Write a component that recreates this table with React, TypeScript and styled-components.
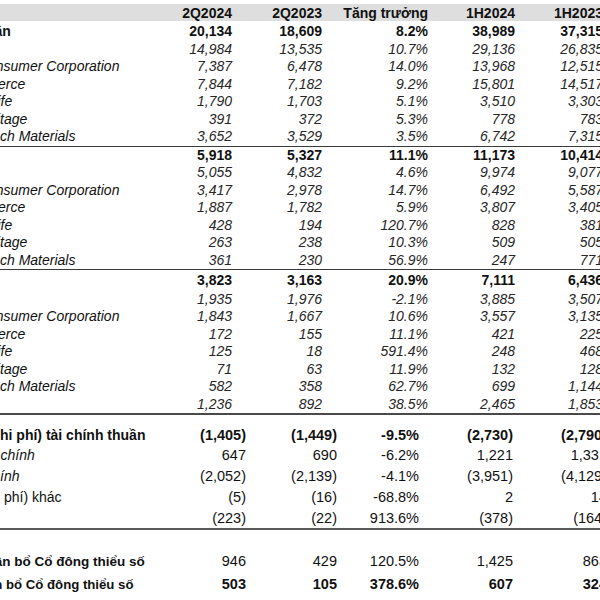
import React from "react";
import styled, { createGlobalStyle } from "styled-components";

const GlobalStyle = createGlobalStyle`
  html, body {
    margin: 0;
    padding: 0;
    background: #ffffff;
    overflow: hidden;
  }
  body {
    font-family: "Liberation Sans", Arial, sans-serif;
    color: #111111;
  }
`;

/* The sheet is wider than the window: its label column begins 150px left of the page. */
const SHIFT = 150;
const UPPER_COLS = "300px 82px 90px 106px 87px 88px";
const LOWER_COLS = "300px 96px 91px 82px 94px 94px";

const Sheet = styled.div`
  width: 760px;
  margin-left: -${SHIFT}px;
  padding-top: 4px;
  display: flex;
  flex-direction: column;
`;

const Section = styled.div<{ $size: number }>`
  display: flex;
  flex-direction: column;
  font-size: ${(p) => p.$size}px;
`;

const HeaderRow = styled.div`
  display: grid;
  grid-template-columns: ${UPPER_COLS};
  height: 17px;
  line-height: 19px;
  background: #dedede;
  font-weight: 700;
  margin-bottom: 2px;
  white-space: nowrap;
`;

const DataRow = styled.div<{ $cols: string; $h: number }>`
  display: grid;
  grid-template-columns: ${(p) => p.$cols};
  height: ${(p) => p.$h}px;
  line-height: ${(p) => p.$h}px;
  white-space: nowrap;
`;

const LabelCell = styled.div<{ $bold?: boolean; $italic?: boolean; $size?: number }>`
  display: flex;
  min-width: 0;
  font-weight: ${(p) => (p.$bold ? 700 : 400)};
  font-style: ${(p) => (p.$italic ? "italic" : "normal")};
  ${(p) => (p.$size ? `font-size: ${p.$size}px;` : "")}
`;

/* the start of a label that lies left of the window; it ends where the visible part begins */
const LabelLead = styled.span<{ $w: number }>`
  display: flex;
  justify-content: flex-end;
  flex: none;
  width: ${(p) => p.$w}px;
`;

const LabelRest = styled.span`
  flex: none;
`;

const NumCell = styled.div<{ $bold?: boolean; $italic?: boolean }>`
  text-align: right;
  font-weight: ${(p) => (p.$bold ? 700 : 400)};
  font-style: ${(p) => (p.$italic ? "italic" : "normal")};
  color: ${(p) => (p.$italic ? "#262626" : "#111111")};
`;

const Rule = styled.div<{ $w: number; $color: string }>`
  height: 0;
  border-top: ${(p) => p.$w}px solid ${(p) => p.$color};
`;

const Spacer = styled.div<{ $h: number }>`
  height: ${(p) => p.$h}px;
`;

type Line = {
  lead: string;
  rest?: string;
  at: number; // page x where the visible part of the label begins
  values: string[];
  bold?: boolean;
  italic?: boolean;
  italicValues?: boolean;
  valueBold?: boolean;
  size?: number;
  h?: number;
};

const HIDDEN = -10;

const mcc = (v: string[]): Line => ({ lead: "Masan Con", rest: "sumer Corporation", at: 3.5, italic: true, italicValues: true, values: v });
const wcm = (v: string[]): Line => ({ lead: "WinComm", rest: "erce", at: -2, italic: true, italicValues: true, values: v });
const mml = (v: string[]): Line => ({ lead: "Masan MEATLi", rest: "fe", at: 0.5, italic: true, italicValues: true, values: v });
const plh = (v: string[]): Line => ({ lead: "Phuc Long Heri", rest: "tage", at: 0, italic: true, italicValues: true, values: v });
const mht = (v: string[]): Line => ({ lead: "Masan High-Te", rest: "ch Materials", at: 0, italic: true, italicValues: true, values: v });
const crownx = (v: string[]): Line => ({ lead: "The CrownX", at: HIDDEN, italic: true, italicValues: true, values: v });

const block1: Line[] = [
  { lead: "Doanh thu thuầ", rest: "n", at: 2.3, bold: true, valueBold: true, values: ["20,134", "18,609", "8.2%", "38,989", "37,315"] },
  crownx(["14,984", "13,535", "10.7%", "29,136", "26,835"]),
  mcc(["7,387", "6,478", "14.0%", "13,968", "12,515"]),
  wcm(["7,844", "7,182", "9.2%", "15,801", "14,517"]),
  mml(["1,790", "1,703", "5.1%", "3,510", "3,303"]),
  plh(["391", "372", "5.3%", "778", "783"]),
  mht(["3,652", "3,529", "3.5%", "6,742", "7,315"]),
];

const block2: Line[] = [
  { lead: "EBITDA", at: HIDDEN, bold: true, valueBold: true, values: ["5,918", "5,327", "11.1%", "11,173", "10,414"] },
  crownx(["5,055", "4,832", "4.6%", "9,974", "9,077"]),
  mcc(["3,417", "2,978", "14.7%", "6,492", "5,587"]),
  wcm(["1,887", "1,782", "5.9%", "3,807", "3,405"]),
  mml(["428", "194", "120.7%", "828", "381"]),
  plh(["263", "238", "10.3%", "509", "505"]),
  mht(["361", "230", "56.9%", "247", "771"]),
];

const block3: Line[] = [
  { lead: "EBIT", at: HIDDEN, bold: true, valueBold: true, h: 20.5, values: ["3,823", "3,163", "20.9%", "7,111", "6,436"] },
  crownx(["1,935", "1,976", "-2.1%", "3,885", "3,507"]),
  mcc(["1,843", "1,667", "10.6%", "3,557", "3,135"]),
  wcm(["172", "155", "11.1%", "421", "225"]),
  mml(["125", "18", "591.4%", "248", "468"]),
  plh(["71", "63", "11.9%", "132", "128"]),
  mht(["582", "358", "62.7%", "699", "1,144"]),
  { lead: "Techcombank", at: HIDDEN, italic: true, italicValues: true, values: ["1,236", "892", "38.5%", "2,465", "1,853"] },
];

const finance: Line[] = [
  { lead: "Thu nhập/(C", rest: "hi phí) tài chính thuần", at: 0, size: 14, bold: true, valueBold: true, values: ["(1,405)", "(1,449)", "-9.5%", "(2,730)", "(2,790)"] },
  { lead: "Thu nhập tài\u00a0", rest: "chính", at: 0.5, size: 14, italic: true, values: ["647", "690", "-6.2%", "1,221", "1,331"] },
  { lead: "Chi phí tài ch", rest: "ính", at: 0, size: 14, italic: true, values: ["(2,052)", "(2,139)", "-4.1%", "(3,951)", "(4,129)"] },
  { lead: "Thu nhập/(Chi\u00a0", rest: "phí) khác", at: 4, size: 14, values: ["(5)", "(16)", "-68.8%", "2", "14"] },
  { lead: "Thuế", at: HIDDEN, size: 14, values: ["(223)", "(22)", "913.6%", "(378)", "(164)"] },
];

const profit: Line[] = [
  { lead: "LNST trước phâ", rest: "n bổ Cổ đông thiểu số", at: 2.3, size: 13.5, bold: true, values: ["946", "429", "120.5%", "1,425", "863"] },
  { lead: "LNST sau phân\u00a0", rest: "bổ Cổ đông thiểu số", at: 6, size: 13.2, bold: true, valueBold: true, values: ["503", "105", "378.6%", "607", "324"] },
];

const headers = ["2Q2024", "2Q2023", "Tăng trưởng", "1H2024", "1H2023"];

function Rows({ lines, cols, h }: { lines: Line[]; cols: string; h: number }) {
  return (
    <>
      {lines.map((l, i) => (
        <DataRow key={i} $cols={cols} $h={l.h ?? h}>
          <LabelCell $bold={l.bold} $italic={l.italic} $size={l.size}>
            <LabelLead $w={l.at + SHIFT}>{l.lead}</LabelLead>
            {l.rest && <LabelRest>{l.rest}</LabelRest>}
          </LabelCell>
          {l.values.map((v, j) => (
            <NumCell key={j} $bold={l.valueBold} $italic={l.italicValues}>
              {v}
            </NumCell>
          ))}
        </DataRow>
      ))}
    </>
  );
}

export default function App() {
  return (
    <>
      <GlobalStyle />
      <Sheet>
        <Section $size={14}>
          <HeaderRow>
            <LabelCell />
            {headers.map((h) => (
              <NumCell key={h} $bold>
                {h}
              </NumCell>
            ))}
          </HeaderRow>
          <Rows lines={block1} cols={UPPER_COLS} h={17.5} />
          <Rule $w={1} $color="#3a3a3a" />
          <Rows lines={block2} cols={UPPER_COLS} h={17.5} />
          <Rule $w={1} $color="#3a3a3a" />
          <Rows lines={block3} cols={UPPER_COLS} h={17.5} />
          <Rule $w={2} $color="#4a4a4a" />
        </Section>
        <Section $size={14.5}>
          <Spacer $h={9.5} />
          <Rows lines={finance} cols={LOWER_COLS} h={20.8} />
          <Rule $w={2} $color="#5a5a5a" />
          <Spacer $h={19.7} />
          <Rows lines={profit} cols={LOWER_COLS} h={23} />
        </Section>
      </Sheet>
    </>
  );
}
